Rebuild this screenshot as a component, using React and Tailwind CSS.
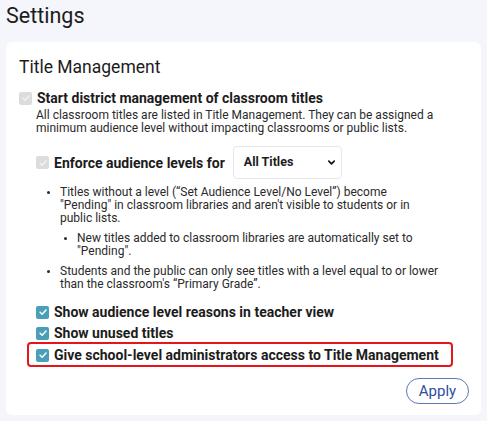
import React from 'react';

const font = { fontFamily: 'Roboto, "Liberation Sans", sans-serif' };

const Check = ({ disabled }) => (
  <span
    className={`flex h-[13px] w-[13px] shrink-0 items-center justify-center rounded-[2px] ${
      disabled ? 'bg-[#dcdcdc]' : 'bg-[#4a9fb8]'
    }`}
  >
    <svg viewBox="0 0 12 12" className="h-[10px] w-[10px]" fill="none">
      <path
        d="M2.5 6.2 L5 8.6 L9.6 3.6"
        stroke={disabled ? '#f2f2f2' : '#ffffff'}
        strokeWidth="1.8"
        strokeLinecap="round"
        strokeLinejoin="round"
      />
    </svg>
  </span>
);

const CheckRow = ({ label, disabled }) => (
  <div className="flex items-center gap-[5px]">
    <Check disabled={disabled} />
    <span className="whitespace-nowrap text-[14px] font-bold leading-[18px] text-[#1c1c1c]">{label}</span>
  </div>
);

export default function App() {
  return (
    <div className="h-[421px] w-[487px] overflow-hidden bg-[#f4f6fb] px-[6px] text-[#1c1c1c]" style={font}>
      <h1 className="pt-[3px] text-[21.5px] leading-[26px]">Settings</h1>

      <div className="mt-[13px] rounded-[6px] bg-white pb-[11px] pl-[13px] pr-[12px] pt-[14px]">
        <h2 className="text-[17.5px] leading-[22px]">Title Management</h2>

        <div className="mt-[11px]">
          <CheckRow label="Start district management of classroom titles" disabled />
          <p className="mt-[2px] whitespace-nowrap pl-[17px] text-[12px] leading-[13px] text-[#2a2a2a]">
            All classroom titles are listed in Title Management. They can be assigned a
            <br />
            minimum audience level without impacting classrooms or public lists.
          </p>
        </div>

        <div className="mt-[11px] pl-[17px]">
          <div className="flex items-center gap-[5px]">
            <Check disabled />
            <span className="text-[14px] font-bold leading-[18px]">Enforce audience levels for</span>
            <div className="ml-[3px] flex h-[33px] w-[109px] items-center justify-between rounded-[4px] border border-[#e4e7ef] pl-[10px] pr-[5px]">
              <span className="text-[12.5px] font-bold">All Titles</span>
              <svg viewBox="0 0 10 10" className="h-[9px] w-[9px]" fill="none">
                <path d="M2 3.5 L5 6.5 L8 3.5" stroke="#111" strokeWidth="1.8" strokeLinecap="round" strokeLinejoin="round" />
              </svg>
            </div>
          </div>

          <ul className="mt-[7px] list-disc whitespace-nowrap pl-[24px] text-[12px] leading-[13px] text-[#2a2a2a] marker:text-[10px]">
            <li>
              Titles without a level (“Set Audience Level/No Level”) become
              <br />
              "Pending" in classroom libraries and aren't visible to students or in
              <br />
              public lists.
              <ul className="mt-[7px] list-disc pl-[17px]">
                <li>
                  New titles added to classroom libraries are automatically set to
                  <br />
                  "Pending".
                </li>
              </ul>
            </li>
            <li className="mt-[7px]">
              Students and the public can only see titles with a level equal to or lower
              <br />
              than the classroom's “Primary Grade”.
            </li>
          </ul>

          <div className="mt-[12px] flex flex-col gap-[3px]">
            <CheckRow label="Show audience level reasons in teacher view" />
            <CheckRow label="Show unused titles" />
            <div className="-ml-[9px] -mt-[3px] mr-[16px] rounded-[4px] border-2 border-[#e8141c] pb-[1px] pl-[7px] pt-[2px]">
              <CheckRow label="Give school-level administrators access to Title Management" />
            </div>
          </div>
        </div>

        <div className="mt-[11px] flex justify-end">
          <button className="h-[26px] w-[63px] rounded-full border border-[#5a78b8] text-[15px] leading-none text-[#2d4f9e]">
            Apply
          </button>
        </div>
      </div>
    </div>
  );
}
